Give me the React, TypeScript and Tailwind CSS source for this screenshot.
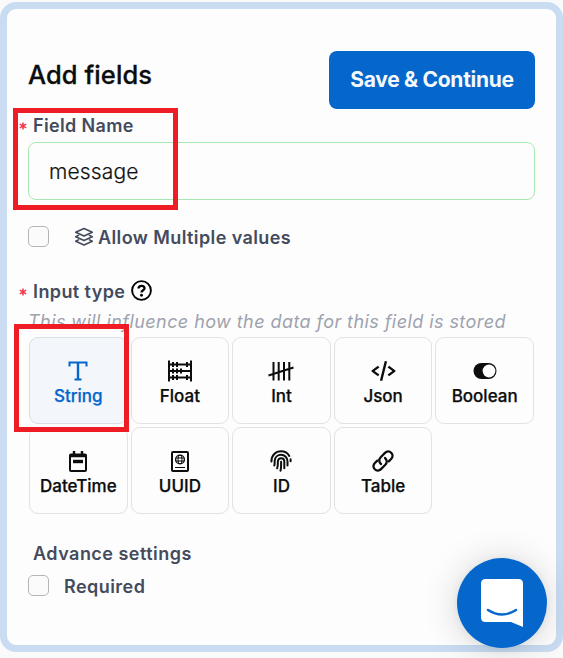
import type { ReactNode } from "react";
import { BiCodeAlt } from "react-icons/bi";

const StringIcon = () => (
  <svg viewBox="0 0 20 20" className="size-5" fill="none" stroke="currentColor" strokeWidth="2">
    <path d="M1.5 5.5V1.5H18.5V5.5M6.500 18.5H13.5" />
    <path d="M10 1.5V18.5" strokeWidth="2.400" />
  </svg>
);

const AbacusIcon = () => (
  <svg viewBox="0 0 24 22" className="h-[22px] w-6" fill="none" stroke="currentColor" strokeWidth="2">
    <path d="M1 0.5V21.5M23 0.5V21.5M1 4.5H23M1 11H23M1 17.5H23" />
    <path d="M5 2V7M9 2V7M19 2V7M5 8.5V13.5M9 8.5V13.5M13 8.5V13.5M5 15V20M9 15V20M19 15V20" />
  </svg>
);

const TallyIcon = () => (
  <svg viewBox="0 0 26 20" className="h-5 w-[26px]" fill="none" stroke="currentColor" strokeWidth="2">
    <path d="M5.500 1V19.500M10.700 1V19.500M16 1V19.500M21.300 1V19.500M0.500 14.500L25.500 6.500" />
  </svg>
);

const ToggleIcon = () => (
  <svg viewBox="0 0 24 16" className="h-4 w-6" fill="currentColor">
    <rect x="0.5" y="0" width="23" height="16" rx="8" />
    <circle cx="16" cy="8" r="6.4" fill="#fdfdfd" />
  </svg>
);

const CalendarIcon = () => (
  <svg viewBox="0 0 18 21" className="h-[21px] w-[18px]" fill="none" stroke="currentColor" strokeWidth="2">
    <rect x="1" y="3.5" width="16" height="16.5" rx="1" />
    <path d="M1 5H17M5 0V4M13 0V4" strokeWidth="2.4" />
    <path d="M4 10.5H14" strokeWidth="3.4" />
  </svg>
);

const PassportIcon = () => (
  <svg viewBox="0 0 18 21" className="h-[21px] w-[18px]" fill="none" stroke="currentColor" strokeWidth="1">
    <rect x="1" y="1" width="16" height="19" rx="1" strokeWidth="2" />
    <circle cx="9" cy="8.5" r="4.4" strokeWidth="1.3" />
    <ellipse cx="9" cy="8.5" rx="2" ry="4.4" />
    <path d="M4.6 7H13.4M4.6 10H13.4M4 16.5H14" />
  </svg>
);

const FingerprintIcon = () => (
  <svg viewBox="0 0 22 22" className="size-[22px]" fill="none" stroke="currentColor" strokeWidth="2" strokeLinecap="round">
    <path d="M1.400 11.500C1.400 5.200 5.700 1.200 11 1.200C14.700 1.200 17.700 3 19.300 5.900M20.600 9.300V11.300" />
    <path d="M4.300 15.500C4.900 13.600 4.500 12.500 4.700 10.700C5 7.100 7.600 4.800 11 4.800C14.800 4.800 17.500 7.700 17.500 11.300V15.500" />
    <path d="M7.100 18.300C8.200 15.800 7.700 13.500 7.900 11.200C8.100 9.300 9.400 8.200 11.100 8.200C13 8.200 14.300 9.600 14.300 11.500V18.300" />
    <path d="M11.100 11.700C11.200 15.200 11.200 18.200 10.500 20.700" />
  </svg>
);

const LinkIcon = () => (
  <svg viewBox="0 0 22 22" className="size-[22px]" fill="none" stroke="currentColor" strokeWidth="2.300" strokeLinecap="round" strokeLinejoin="round">
    <path d="M9 14C6.800 12.200 6.700 9.200 8.700 7.200L13 2.900C14.900 1 17.500 1 19.200 2.700C21 4.500 21 7.100 19.100 9L16.700 11.400" />
    <path d="M13 8C15.200 9.800 15.300 12.800 13.300 14.800L9 19.100C7.100 21 4.500 21 2.800 19.300C1 17.500 1 14.900 2.900 13L5.300 10.600" />
  </svg>
);

const LayersIcon = () => (
  <svg viewBox="0 0 20 20" className="size-5" fill="none" stroke="currentColor" strokeWidth="1.6" strokeLinejoin="round" strokeLinecap="round">
    <path d="M10 1.5L18.3 5.3L10 9.1L1.7 5.3Z" />
    <path d="M4.5 8.4L1.7 9.8L10 13.6L18.3 9.8L15.5 8.4" />
    <path d="M4.5 12.9L1.7 14.3L10 18.1L18.3 14.3L15.5 12.9" />
  </svg>
);

const HelpIcon = () => (
  <svg viewBox="0 0 21 21" className="size-[21px]" fill="none" stroke="currentColor" strokeWidth="1.9">
    <circle cx="10.5" cy="10.500" r="9.400" />
    <path d="M7.500 8.600C7.500 6.900 8.700 5.800 10.500 5.800S13.500 6.900 13.500 8.300C13.500 10.200 10.500 10.300 10.500 12.500" strokeWidth="2.300" />
    <circle cx="10.500" cy="15.200" r="1.450" fill="currentColor" stroke="none" />
  </svg>
);

const types: { label: string; icon: ReactNode }[] = [
  { label: "String", icon: <StringIcon /> },
  { label: "Float", icon: <AbacusIcon /> },
  { label: "Int", icon: <TallyIcon /> },
  { label: "Json", icon: <BiCodeAlt className="h-[26px] w-[29px]" preserveAspectRatio="none" /> },
  { label: "Boolean", icon: <ToggleIcon /> },
  { label: "DateTime", icon: <CalendarIcon /> },
  { label: "UUID", icon: <PassportIcon /> },
  { label: "ID", icon: <FingerprintIcon /> },
  { label: "Table", icon: <LinkIcon /> },
];

const Checkbox = () => (
  <span className="size-[21px] shrink-0 rounded-[5px] border border-[#b5b5b5] bg-[#fbfbfb]" />
);

const Star = () => (
  <svg viewBox="0 0 8 8" className="mt-px size-2 text-[#f5344a]" stroke="currentColor" strokeWidth="1.5">
    <path d="M4 0.4V7.6M0.8 2.2L7.2 5.8M7.2 2.2L0.8 5.8" />
  </svg>
);

export default function App() {
  return (
    <div className="relative h-[658px] w-[563px] overflow-hidden bg-[#fafafa] pt-[2px] font-['Inter',sans-serif] text-[#444b5d]">
      <main className="h-[650px] rounded-[16px] border-[7px] border-[#c9dcf2] bg-[#fdfdfd] px-[21px] pt-[42px]">
        <header className="flex h-[58px] justify-between">
          <h1 className="pt-[6px] text-[25.5px] leading-9 font-medium tracking-[0.08px] text-[#0c0d0e] [-webkit-text-stroke:0.3px]">Add fields</h1>
          <button className="h-[58px] w-[206px] rounded-lg bg-[#0566cb] text-[21px] font-bold tracking-[-0.3px] text-[#f5f9fd]">
            Save &amp; Continue
          </button>
        </header>

        <div className="-ml-[9px] mt-[4px] flex h-6 items-center gap-[6px] text-[18px] font-semibold tracking-[0.35px]">
          <Star />
          <span>Field Name</span>
        </div>
        <div className="mt-[5px] flex h-[58px] items-center rounded-lg border border-[#a9e8b4] pt-0.5 pl-5 text-[21px] font-light tracking-[0.15px] text-[#111] [-webkit-text-stroke:0.2px]">
          message
        </div>

        <div className="mt-[26px] flex h-[22px] items-start text-[18px] leading-6 font-semibold tracking-[0.4px]">
          <Checkbox />
          <span className="mt-px mr-1 ml-[25px]"><LayersIcon /></span>
          <span>Allow Multiple values</span>
        </div>

        <div className="-ml-[9px] mt-[31px] flex h-6 items-center gap-[6px] text-[18px] font-semibold tracking-[0.4px]">
          <Star />
          <span>Input type</span>
          <span className="-mt-0.5 text-black"><HelpIcon /></span>
        </div>
        <p className="mt-[6px] h-[26px] text-[18px] leading-[26px] whitespace-nowrap italic tracking-[0.43px] text-[#9da2ae]">
          This will influence how the data for this field is stored
        </p>

        <div className="mx-px mt-[2px] grid grid-cols-5 gap-[3px]">
          {types.map((t, i) => (
            <div
              key={t.label}
              className={`flex h-[87px] flex-col items-center rounded-[9px] border pt-5 ${
                i === 0 ? "border-[#dadfe5] bg-[#f3f6fb] text-[#0566cb]" : "border-[#e2e2e2] bg-[#fdfdfd] text-[#0c0d0e]"
              }`}
            >
              <span className="flex h-[26px] items-center">{t.icon}</span>
              <span className="text-[17px] leading-6 font-medium [-webkit-text-stroke:0.25px]">{t.label}</span>
            </div>
          ))}
        </div>

        <h2 className="mt-[28px] ml-[5px] text-[18px] leading-6 font-semibold tracking-[0.48px]">Advance settings</h2>
        <div className="mt-[9px] flex h-[22px] items-start gap-[15px] text-[18px] leading-6 font-semibold tracking-[0.45px]">
          <Checkbox />
          <span>Required</span>
        </div>
      </main>

      <div className="absolute top-[108px] left-[13px] h-[102px] w-[165px] border-[5px] border-[#ee1c25]" />
      <div className="absolute top-[324px] left-[14px] h-[108px] w-[115px] border-[5px] border-[#ee1c25]" />

      <button className="absolute top-[558px] left-[457px] flex size-[90px] items-center justify-center rounded-full bg-[#0566cb] shadow-[0_2px_36px_rgba(0,0,0,0.16),0_1px_8px_rgba(0,0,0,0.06)]">
        <svg viewBox="0 0 42 48" className="h-12 w-[42px]">
          <path d="M4.5 0H37.500Q42 0 42 4.500V48L30 43H4.500Q0 43 0 38.500V4.500Q0 0 4.500 0Z" fill="#fff" />
          <path d="M7 31Q21 40 35 31" fill="none" stroke="#0566cb" strokeWidth="2.500" strokeLinecap="round" />
        </svg>
      </button>
    </div>
  );
}
